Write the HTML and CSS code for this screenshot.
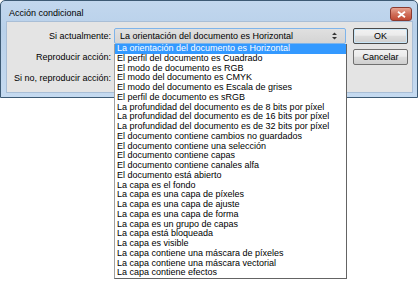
FILE: index.html
```html
<!DOCTYPE html>
<html>
<head>
  <title>Acción condicional</title>
  <link rel="stylesheet" href="styles.css">
</head>
<body>
  <div class="dialog">
    <div class="titlebar">
      <span class="title">Acción condicional</span>
      <div class="close-button">
        <svg width="9" height="7" viewBox="0 0 9 7">
          <path d="M1 0.8 L8 6.2 M8 0.8 L1 6.2" stroke="#fff" stroke-width="1.8"/>
        </svg>
      </div>
    </div>

    <div class="client">
      <label class="field-label">Si actualmente:</label>
      <div class="select-wrap">
        <div class="select active">
          <span>La orientación del documento es Horizontal</span>
          <svg class="arrows" width="5" height="8" viewBox="0 0 5 8">
            <path d="M0 3 L2.5 0.5 L5 3 Z M0 5 L2.5 7.5 L5 5 Z" fill="#333"/>
          </svg>
        </div>

        <ul class="dropdown">
          <li class="selected">La orientación del documento es Horizontal</li>
          <li>El perfil del documento es Cuadrado</li>
          <li>El modo de documento es RGB</li>
          <li>El modo del documento es CMYK</li>
          <li>El modo del documento es Escala de grises</li>
          <li>El perfil de documento es sRGB</li>
          <li>La profundidad del documento es de 8 bits por píxel</li>
          <li>La profundidad del documento es de 16 bits por píxel</li>
          <li>La profundidad del documento es de 32 bits por píxel</li>
          <li>El documento contiene cambios no guardados</li>
          <li>El documento contiene una selección</li>
          <li>El documento contiene capas</li>
          <li>El documento contiene canales alfa</li>
          <li>El documento está abierto</li>
          <li>La capa es el fondo</li>
          <li>La capa es una capa de píxeles</li>
          <li>La capa es una capa de ajuste</li>
          <li>La capa es una capa de forma</li>
          <li>La capa es un grupo de capas</li>
          <li>La capa está bloqueada</li>
          <li>La capa es visible</li>
          <li>La capa contiene una máscara de píxeles</li>
          <li>La capa contiene una máscara vectorial</li>
          <li>La capa contiene efectos</li>
        </ul>
      </div>
      <button class="btn default">OK</button>

      <label class="field-label">Reproducir acción:</label>
      <div class="select"></div>
      <button class="btn">Cancelar</button>

      <label class="field-label">Si no, reproducir acción:</label>
      <div class="select"></div>
    </div>
  </div>
</body>
</html>
```

FILE: styles.css
```css
html, body {
  height: 100%;
}

body {
  margin: 0;
  background: #fff;
  font-family: "Liberation Sans", Arial, sans-serif;
  font-size: 9px;
  color: #000;
}

.dialog {
  width: 416px;
  height: 96px;
  border: 1px solid #3d5a74;
  border-radius: 5px 5px 0 0;
  background: linear-gradient(#c2d7ee, #b9d1ea 30%, #c5daf0);
  display: flex;
  flex-direction: column;
}

.titlebar {
  height: 20px;
  display: flex;
  align-items: center;
  justify-content: space-between;
  padding: 0 5px 0 8px;
}

.title {
  font-size: 9px;
  margin-top: 4px;
}

.close-button {
  width: 20px;
  height: 12px;
  margin-top: 6px;
  border: 1px solid #8a3a30;
  border-radius: 3px;
  background: linear-gradient(#e8a493, #d0705b 50%, #c24a34);
  display: flex;
  align-items: center;
  justify-content: center;
}

.client {
  margin: 0 4px 4px 5px;
  flex: 1;
  background: #e4e4e4;
  border: 1px solid #a9bed6;
  display: grid;
  grid-template-columns: 104px 232px 55px;
  grid-auto-rows: 16px;
  column-gap: 3px;
  row-gap: 5px;
  padding-top: 6px;
  align-items: center;
}

.client .btn {
  margin-left: 4px;
}

.field-label {
  text-align: right;
  white-space: nowrap;
}

.select-wrap {
  position: relative;
  height: 16px;
  z-index: 5;
}

.select {
  height: 14px;
  border: 1px solid #8e8f8f;
  border-radius: 2px;
  background: linear-gradient(#f2f2f2, #ebebeb 45%, #dddddd 50%, #cfcfcf);
  display: flex;
  align-items: center;
  justify-content: space-between;
  padding: 0 8px 0 5px;
}

.select.active {
  border-color: #7eb4ea;
  background: linear-gradient(#e0e0e0, #d4d4d4);
}

.dropdown {
  position: absolute;
  top: 16px;
  left: 0;
  width: 231px;
  height: 234px;
  margin: 0;
  padding: 0;
  list-style: none;
  background: #fff;
  border: 1px solid #646464;
  border-left-color: #a0a0a0;
  border-top: none;
  z-index: 10;
}

.dropdown li {
  height: 9.75px;
  line-height: 9.75px;
  padding-left: 2px;
  white-space: nowrap;
}

.dropdown li.selected {
  background: #3399ff;
  color: #fff;
}

.btn {
  width: 55px;
  height: 16px;
  padding: 0;
  font-family: inherit;
  font-size: 9px;
  color: #000;
  border: 1px solid #707070;
  border-radius: 2px;
  background: linear-gradient(#f2f2f2, #ebebeb 45%, #dddddd 50%, #cfcfcf);
}

.btn.default {
  border-color: #4a4a4a;
  box-shadow: inset 0 0 0 1px #c8e6f8;
}
```
